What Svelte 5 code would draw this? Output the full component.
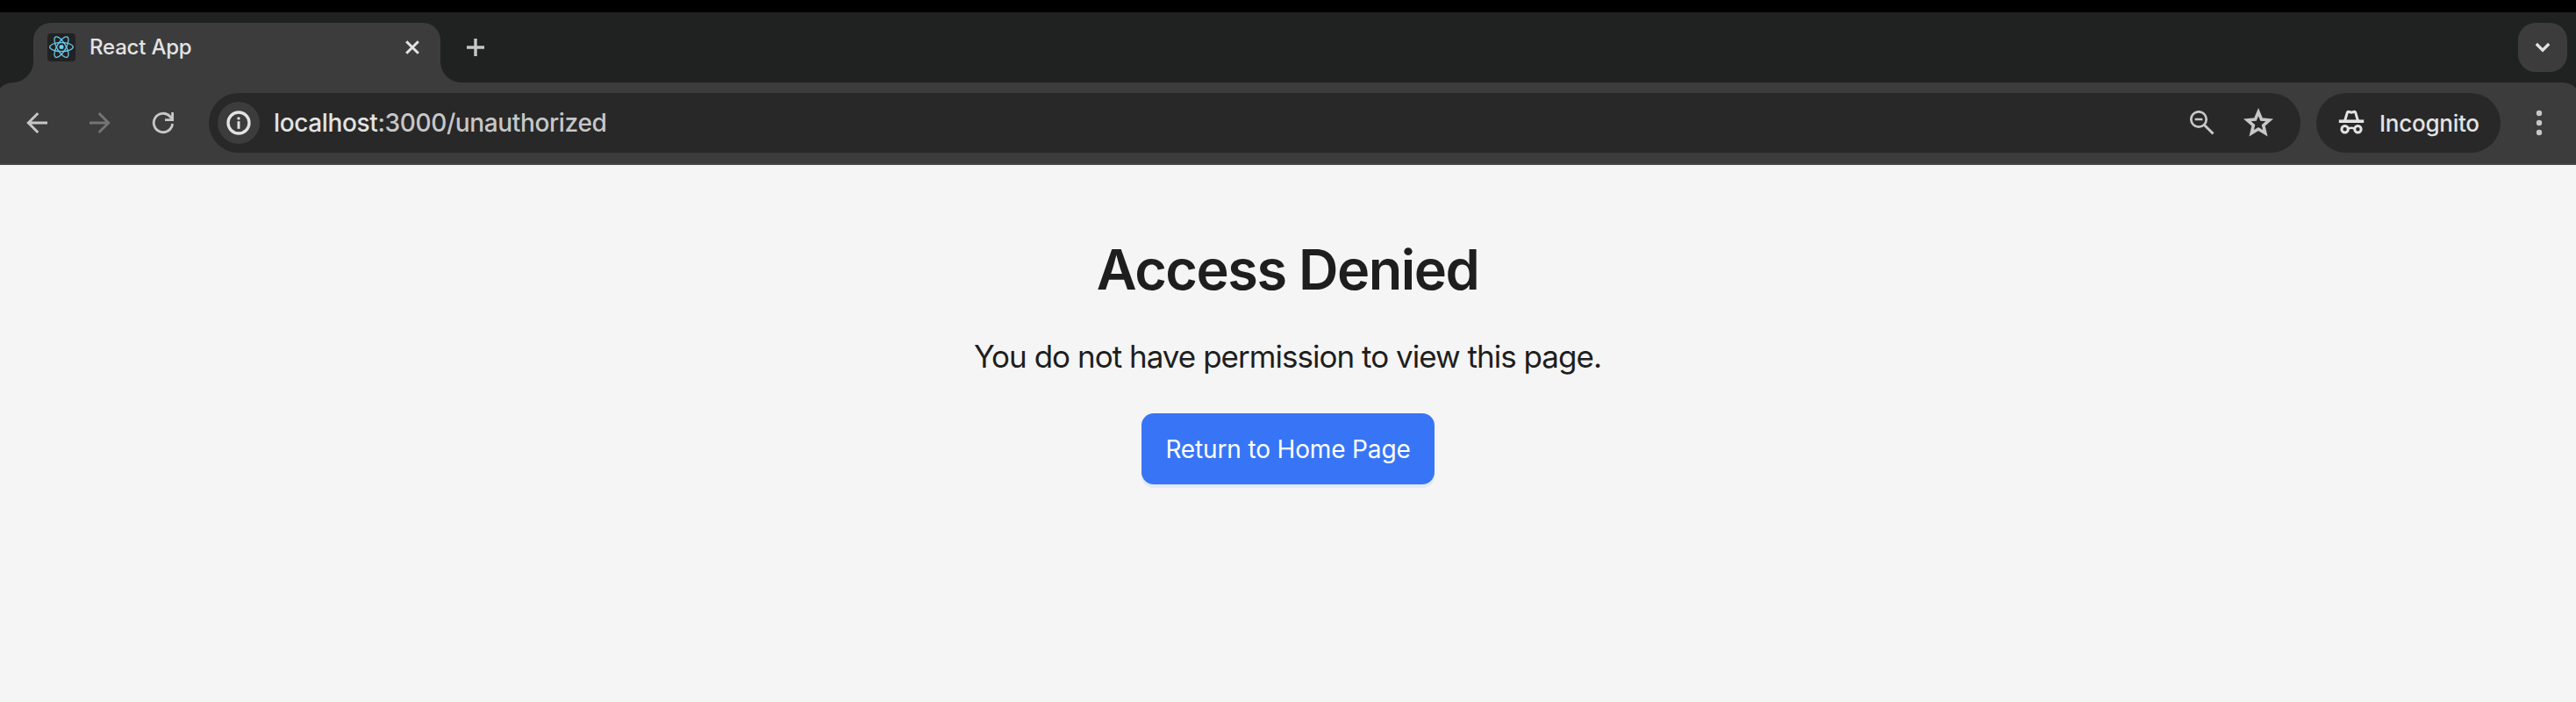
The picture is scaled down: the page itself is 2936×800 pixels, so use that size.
<script>
  const orbits = [0, 60, 120];
</script>

<div class="window">
  <header class="browser">
    <div class="tabstrip">
      <div class="tab">
        <svg class="favicon" width="32" height="32" viewBox="0 0 32 32">
          <rect width="32" height="32" rx="4" fill="#222" />
          <g transform="translate(16 15.6)" fill="none" stroke="#67c9ec" stroke-width="1.3">
            {#each orbits as angle}
              <ellipse rx="13.3" ry="5.1" transform="rotate({angle})" />
            {/each}
            <circle r="2.5" fill="#67d2f6" stroke="none" />
          </g>
        </svg>
        <span class="tab-title">React App</span>
        <svg class="close" width="20" height="20" viewBox="0 0 20 20">
          <path d="M3.2 3.2 16.8 16.8M16.8 3.2 3.2 16.8" fill="none" stroke="#e3e3e3" stroke-width="3" />
        </svg>
      </div>
      <svg class="new-tab" width="20" height="20" viewBox="0 0 20 20">
        <path d="M10 0v20M0 10h20" fill="none" stroke="#c7c7c7" stroke-width="3.4" />
      </svg>
      <div class="tab-search">
        <svg width="20" height="20" viewBox="0 0 20 20">
          <path d="M2.8 6 10 13.2 17.2 6" fill="none" stroke="#e3e3e3" stroke-width="3.2" />
        </svg>
      </div>
    </div>

    <div class="toolbar">
      <svg class="nav" width="32" height="32" viewBox="0 0 32 32" fill="none" stroke="#c7c7c7" stroke-width="2.9">
        <path d="M28 16H6.5M17.3 5 6.3 16l11 11" />
      </svg>
      <svg class="nav" width="32" height="32" viewBox="0 0 32 32" fill="none" stroke="#757575" stroke-width="2.9">
        <path d="M4 16h21.5M14.7 5l11 11-11 11" />
      </svg>
      <svg class="nav" width="32" height="32" viewBox="0 0 32 32" fill="none" stroke="#c7c7c7" stroke-width="2.8">
        <path d="M26.6 17A10.7 10.7 0 1 1 23.6 8.5L26.6 12" />
        <path d="M26.6 4v8.6H18" />
      </svg>

      <div class="omnibox">
        <div class="site-info">
          <svg width="28" height="28" viewBox="0 0 28 28">
            <circle cx="14" cy="14" r="12" fill="none" stroke="#e3e3e3" stroke-width="3.3" />
            <circle cx="14" cy="8.9" r="1.7" fill="#e3e3e3" />
            <path d="M14 12.2v8.6" stroke="#e3e3e3" stroke-width="2.9" />
          </svg>
        </div>
        <span class="url"><span class="host">localhost</span>:3000/unauthorized</span>
        <svg class="zoom" width="28" height="28" viewBox="0 0 28 28" fill="none" stroke="#c7c7c7">
          <circle cx="10" cy="10" r="8.7" stroke-width="2.7" />
          <path d="M5.6 10h8.8" stroke-width="2.5" />
          <path d="M16.2 16.2 26.5 26.5" stroke-width="3" />
        </svg>
        <svg class="star" width="40" height="40" viewBox="0 0 40 40" fill="none" stroke="#c7c7c7" stroke-width="3.6">
          <path d="M20 7.6 23.5 16 32.6 16.8 25.7 22.8 27.8 31.7 20 27 12.2 31.7 14.3 22.8 7.4 16.8 16.5 16Z" />
        </svg>
      </div>

      <div class="incognito">
        <svg width="30" height="30" viewBox="0 0 30 30" fill="none" stroke="#e3e3e3">
          <path d="M0.8 13.2h28.4" stroke-width="3.6" />
          <path d="M7.6 12.5 10.2 3.6Q10.8 2 12.4 2.5L15 3.3 17.6 2.5Q19.2 2 19.8 3.6L22.4 12.5" stroke-width="3" />
          <circle cx="7.6" cy="22.3" r="3.7" stroke-width="3" />
          <circle cx="22.4" cy="22.3" r="3.7" stroke-width="3" />
          <path d="M11 21.6q4-1.6 8 0" stroke-width="2.6" />
        </svg>
        <span>Incognito</span>
      </div>

      <svg class="menu" width="8" height="32" viewBox="0 0 8 32" fill="#c7c7c7">
        <circle cx="4" cy="5" r="3.2" /><circle cx="4" cy="16" r="3.2" /><circle cx="4" cy="27" r="3.2" />
      </svg>
    </div>
  </header>

  <main>
    <h1>Access Denied</h1>
    <p>You do not have permission to view this page.</p>
    <button type="button">Return to Home Page</button>
  </main>
</div>

<style>
  .window {
    display: flex;
    flex-direction: column;
    width: 2936px;
    height: 800px;
    overflow: hidden;
    background: #f5f5f5;
    font-family: Inter, "Liberation Sans", sans-serif;
  }
  svg { display: block; flex: none; }
  .browser {
    flex: none;
    background: #202221;
    border-top: 14px solid #000;
  }
  .tabstrip {
    display: flex;
    height: 80px;
    padding: 12px 10px 0 38px;
    box-sizing: border-box;
  }
  .tab {
    position: relative;
    display: flex;
    align-items: center;
    width: 464px;
    height: 68px;
    padding: 0 22px 12px 16px;
    box-sizing: border-box;
    border-radius: 20px 20px 0 0;
    background: #3c3c3c;
  }
  .tab::before,
  .tab::after {
    content: "";
    position: absolute;
    bottom: 0;
    width: 24px;
    height: 24px;
  }
  .tab::before {
    right: 100%;
    background: radial-gradient(circle at 0 0, transparent 23.5px, #3c3c3c 24.5px);
  }
  .tab::after {
    left: 100%;
    background: radial-gradient(circle at 100% 0, transparent 23.5px, #3c3c3c 24.5px);
  }
  .tab-title {
    flex: 1;
    margin-left: 16px;
    padding-bottom: 1px;
    color: #e3e3e3;
    font-size: 24px;
    font-weight: 500;
    line-height: 30px;
    letter-spacing: -0.2px;
  }
  .new-tab { margin: 18px 0 0 30px; }
  .tab-search {
    display: flex;
    align-items: center;
    justify-content: center;
    width: 56px;
    height: 56px;
    margin-left: auto;
    border-radius: 20px;
    background: #3c3c3c;
  }
  .toolbar {
    display: flex;
    align-items: center;
    height: 94px;
    margin: 0 -5px;
    padding: 0 43px 0 31px;
    box-sizing: border-box;
    border-bottom: 2px solid #474747;
    border-radius: 20px 20px 0 0;
    background: #3c3c3c;
  }
  .nav { margin-right: 40px; }
  .omnibox {
    display: flex;
    align-items: center;
    flex: 1;
    height: 68px;
    margin-left: -4px;
    padding: 0 28px 0 10px;
    box-sizing: border-box;
    border-radius: 34px;
    background: #282828;
  }
  .site-info {
    display: flex;
    align-items: center;
    justify-content: center;
    width: 48px;
    height: 48px;
    border-radius: 50%;
    background: #3c3c3c;
  }
  .url {
    flex: 1;
    margin-left: 16px;
    color: #c7c7c7;
    font-size: 28px;
    font-weight: 500;
    line-height: 36px;
    letter-spacing: -0.365px;
  }
  .host { color: #e3e3e3; }
  .zoom { margin-right: 30px; }
  .incognito {
    display: flex;
    align-items: center;
    width: 210px;
    height: 68px;
    margin-left: 18px;
    padding-left: 25px;
    box-sizing: border-box;
    border-radius: 34px;
    background: #282828;
    color: #e3e3e3;
    font-size: 26px;
    font-weight: 500;
    line-height: 34px;
    letter-spacing: -0.25px;
  }
  .incognito span { margin-left: 17px; padding-top: 1px; }
  .menu { margin-left: 40px; }
  main {
    display: flex;
    flex-direction: column;
    align-items: center;
    flex: 1;
    padding-top: 81px;
    color: #1e1e1e;
  }
  h1 {
    margin: 0 1px 0 0;
    font-size: 63px;
    font-weight: 600;
    line-height: 76px;
    letter-spacing: -1.5px;
  }
  p {
    margin: 34px 1px 38px 0;
    font-size: 35px;
    line-height: 54px;
    letter-spacing: -0.98px;
  }
  button {
    width: 334px;
    height: 81px;
    padding: 0;
    border: 0;
    border-radius: 14px;
    background: #3875f6;
    box-shadow: 0 4px 0 #e1eaf6;
    color: #fff;
    font: 400 28px/34px Inter, "Liberation Sans", sans-serif;
    letter-spacing: -0.15px;
  }
</style>
